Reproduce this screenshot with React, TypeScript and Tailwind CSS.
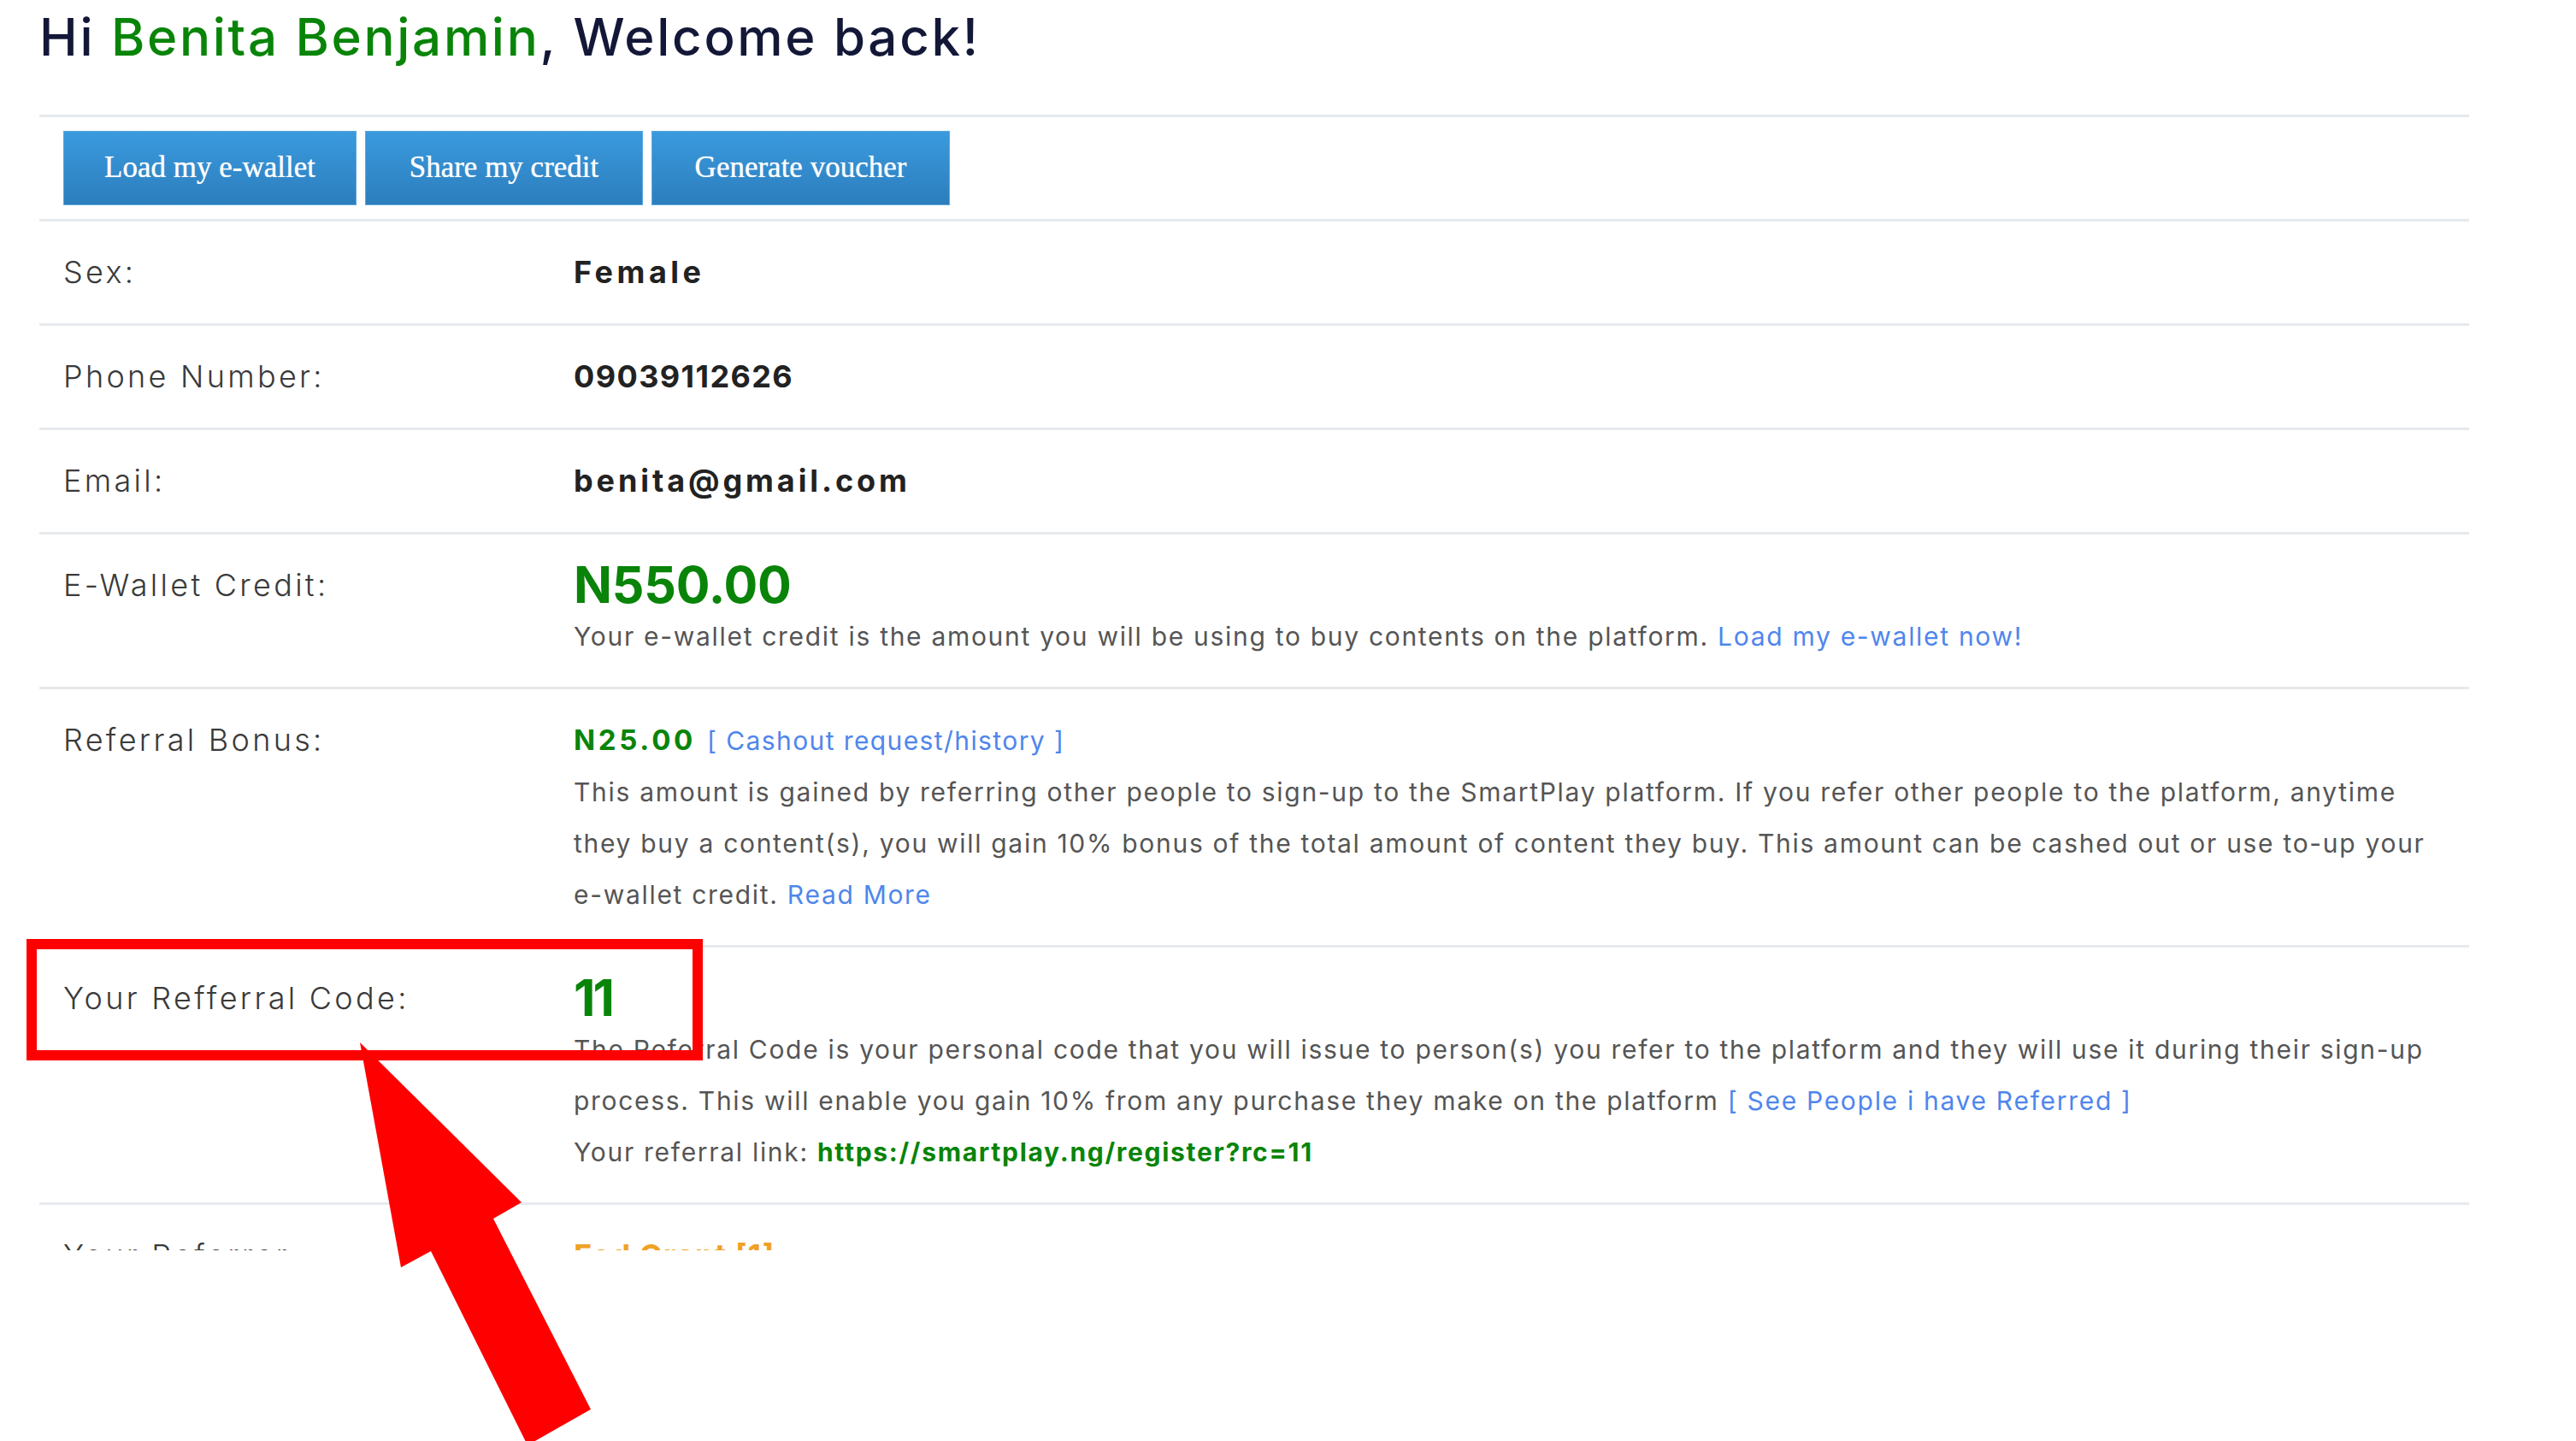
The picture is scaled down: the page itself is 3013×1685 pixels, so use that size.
import React from "react";

const Row = ({ label, children, tight }: { label: string; children: React.ReactNode; tight?: boolean }) => (
  <div className={`flex border-t-[3px] border-[#e6e9ed] pt-[29px] ${tight ? "pb-[30px]" : "pb-[29px]"}`}>
    <div className="w-[625px] shrink-0 pl-[28px] text-[36px] leading-[60px] font-light text-[#3a3a3a] whitespace-nowrap tracking-[3.3px]">
      {label}
    </div>
    <div className="flex-1 min-w-0">{children}</div>
  </div>
);

const P = ({ children }: { children: React.ReactNode }) => (
  <div className="text-[30px] leading-[60px] text-[#555555] whitespace-nowrap tracking-[1.7px]">{children}</div>
);

export default function App() {
  return (
    <div className="relative w-[3013px] h-[1685px] bg-white overflow-hidden font-['Inter','Open_Sans',sans-serif]">
      <div className="ml-[46px] w-[2842px] h-[1462px] overflow-hidden">
        <h1 className="pt-[13px] pb-[61px] text-[60px] leading-[60px] font-medium text-[#131838] whitespace-nowrap tracking-[2.7px]">
          Hi <span className="text-[#098409]">Benita Benjamin</span>, Welcome back!
        </h1>
        <div className="flex gap-[10px] border-t-[3px] border-[#e6e9ed] pl-[28px] pt-[16px] pb-[16px]">
          {[
            ["Load my e-wallet", "w-[343px]"],
            ["Share my credit", "w-[325px]"],
            ["Generate voucher", "w-[349px]"],
          ].map(([t, w]) => (
            <button
              key={t}
              className={`${w} h-[87px] bg-gradient-to-b from-[#3a9ade] to-[#2c7ebd] border border-[#5aa8de] text-white text-[35px] font-['Liberation_Serif',serif] [text-shadow:0_0_1px_rgba(255,255,255,0.8)]`}
            >
              {t}
            </button>
          ))}
        </div>
        <Row label="Sex:" tight>
          <div className="text-[36px] leading-[60px] font-bold text-[#222222] tracking-[4.5px]">Female</div>
        </Row>
        <Row label="Phone Number:" tight>
          <div className="text-[36px] leading-[60px] font-bold text-[#222222] tracking-[1.4px]">09039112626</div>
        </Row>
        <Row label="Email:" tight>
          <div className="text-[36px] leading-[60px] font-bold text-[#222222] tracking-[3.9px]">benita@gmail.com</div>
        </Row>
        <Row label="E-Wallet Credit:">
          <div className="text-[59px] leading-[60px] font-bold text-[#098409] tracking-[-0.2px]">N550.00</div>
          <P>
            Your e-wallet credit is the amount you will be using to buy contents on the platform.{" "}
            <span className="text-[#4f86ec]">Load my e-wallet now!</span>
          </P>
        </Row>
        <Row label="Referral Bonus:">
          <div className="flex items-baseline gap-[13px] leading-[60px] whitespace-nowrap">
            <span className="text-[33px] font-bold text-[#098409] tracking-[3.7px]">N25.00</span>
            <span className="text-[30px] text-[#4f86ec] tracking-[1.4px]">[ Cashout request/history ]</span>
          </div>
          <P>
            This amount is gained by referring other people to sign-up to the SmartPlay platform. If you refer other people to the platform, anytime
          </P>
          <P>
            they buy a content(s), you will gain 10% bonus of the total amount of content they buy. This amount can be cashed out or use to-up your
          </P>
          <P>
            e-wallet credit. <span className="text-[#4f86ec]">Read More</span>
          </P>
        </Row>
        <Row label="Your Refferral Code:">
          <div className="text-[59px] leading-[60px] font-bold text-[#098409] tracking-[-3px]">11</div>
          <P>
            The Referral Code is your personal code that you will issue to person(s) you refer to the platform and they will use it during their sign-up
          </P>
          <P>
            process. This will enable you gain 10% from any purchase they make on the platform{" "}
            <span className="text-[#4f86ec]">[ See People i have Referred ]</span>
          </P>
          <P>
            Your referral link: <span className="font-bold text-[#098409]">https://smartplay.ng/register?rc=11</span>
          </P>
        </Row>
        <Row label="Your Referrer:">
          <div className="text-[36px] leading-[60px] font-bold text-[#f0a126] tracking-[1px]">Fed Grant [1]</div>
        </Row>
      </div>

      <div className="absolute left-[31px] top-[1098px] w-[791px] h-[142px] border-[12px] border-[#ff0000]" />

      <svg
        className="absolute left-0 top-0 pointer-events-none"
        width="3013"
        height="1685"
        viewBox="0 0 3013 1685"
      >
        <polygon
          points="421,1219 610,1406 577,1425 691,1648 617,1690 504,1463 469,1482"
          fill="#ff0000"
        />
      </svg>
    </div>
  );
}
